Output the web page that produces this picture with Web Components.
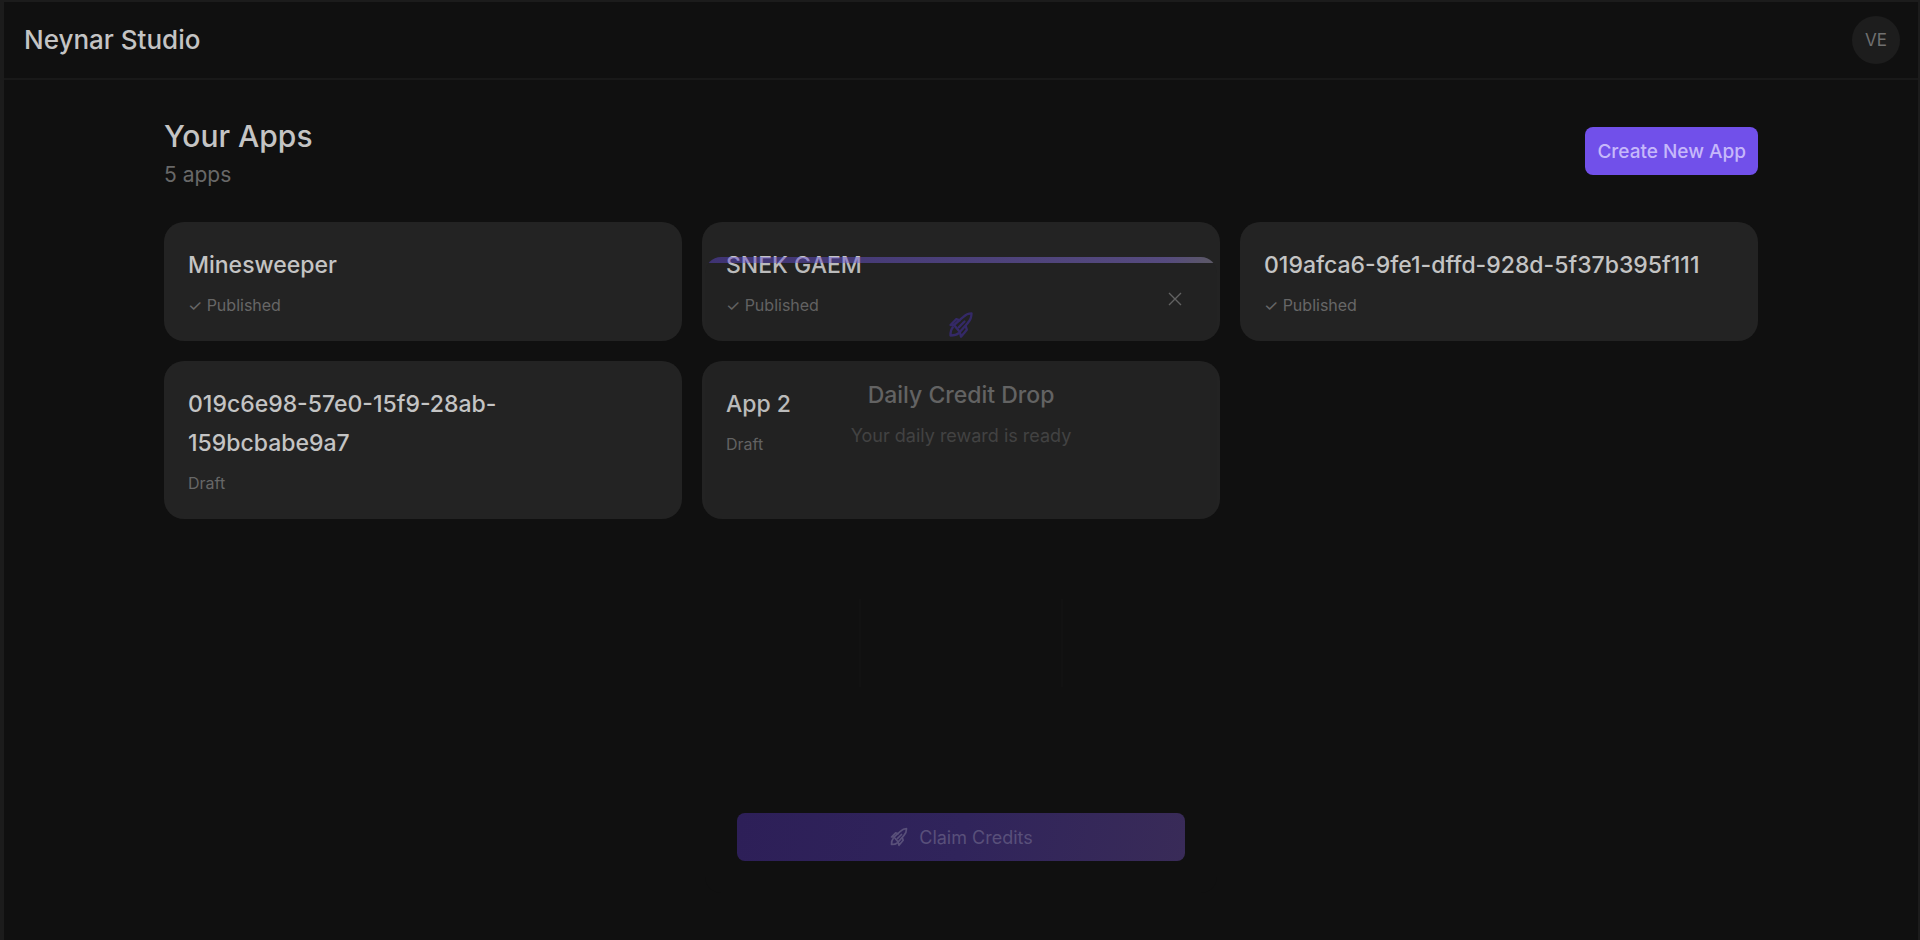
<!DOCTYPE html>
<html lang="en">
<head>
<meta charset="utf-8">
<meta name="viewport" content="width=device-width, initial-scale=1">
<title>Neynar Studio</title>
<style>
    html, body {
        margin: 0;
        min-height: 100%;
        background-color: #101010;
    }

    body {
        display: flex;
        min-height: 100vh;
        color: #c4c4c4;
        font-family: Inter, "Noto Sans", sans-serif;
    }
</style>
</head>
<body>
<studio-shell>
    <studio-header slot="header" initials="VE">Neynar Studio</studio-header>
    <apps-heading count="5 apps">Your Apps</apps-heading>
    <app-grid>
        <app-card status="✓ Published">Minesweeper</app-card>
        <app-card status="✓ Published">SNEK GAEM</app-card>
        <app-card status="✓ Published">019afca6-9fe1-dffd-928d-5f37b395f111</app-card>
        <app-card status="Draft">019c6e98-57e0-15f9-28ab-159bcbabe9a7</app-card>
        <app-card status="Draft">App 2</app-card>
    </app-grid>
    <credit-dialog slot="overlay">
        <span slot="title">Daily Credit Drop</span>
        <span slot="text">Your daily reward is ready</span>
        <span slot="action">Claim Credits</span>
    </credit-dialog>
</studio-shell>

<script>
class StudioShell extends HTMLElement {
    constructor() {
        super();
        this.shadowDOM = this.attachShadow({mode: "open"});
    }

    connectedCallback() {
        this.render();
    }

    render() {
        this.shadowDOM.innerHTML = `
        <style>
            :host {
                display: block;
                position: relative;
                flex: 1;
                box-sizing: border-box;
                border: 2px solid #1c1c1c;
                border-width: 2px 2px 0 4px;
            }

            main {
                padding: 32px 160px;
            }
        </style>
        <slot name="header"></slot>
        <main><slot></slot></main>
        <slot name="overlay"></slot>
        `;
    }
}

class StudioHeader extends HTMLElement {
    constructor() {
        super();
        this.shadowDOM = this.attachShadow({mode: "open"});
    }

    connectedCallback() {
        this.render();
    }

    render() {
        this.shadowDOM.innerHTML = `
        <style>
            :host {
                display: block;
            }

            header {
                display: flex;
                align-items: center;
                justify-content: space-between;
                height: 76px;
                padding: 0 18px 0 20px;
                border-bottom: 2px solid #191919;
            }

            .brand {
                font-size: 26px;
                font-weight: 500;
                line-height: 32px;
            }

            .avatar {
                width: 48px;
                height: 48px;
                padding: 0;
                border: 0;
                border-radius: 50%;
                color: #707070;
                background-color: #1d1d1d;
                font: inherit;
                font-size: 17px;
            }
        </style>
        <header>
            <span class="brand"><slot></slot></span>
            <button class="avatar" type="button">${this.getAttribute("initials")}</button>
        </header>
        `;
    }
}

class AppsHeading extends HTMLElement {
    constructor() {
        super();
        this.shadowDOM = this.attachShadow({mode: "open"});
    }

    connectedCallback() {
        this.render();
    }

    render() {
        this.shadowDOM.innerHTML = `
        <style>
            :host {
                display: flex;
                align-items: center;
                justify-content: space-between;
                margin-bottom: 32px;
            }

            h1 {
                margin: 0;
                font-size: 30px;
                font-weight: 500;
                line-height: 48px;
            }

            p {
                margin: 0;
                color: #686868;
                font-size: 21px;
                line-height: 30px;
            }

            button {
                height: 48px;
                padding: 0 12px;
                border: 0;
                border-radius: 8px;
                color: #c6b8fa;
                background-color: #7150ea;
                font: inherit;
                font-size: 19px;
                font-weight: 500;
            }
        </style>
        <div>
            <h1><slot></slot></h1>
            <p>${this.getAttribute("count")}</p>
        </div>
        <button type="button">Create New App</button>
        `;
    }
}

class AppGrid extends HTMLElement {
    constructor() {
        super();
        this.shadowDOM = this.attachShadow({mode: "open"});
    }

    connectedCallback() {
        this.render();
    }

    render() {
        this.shadowDOM.innerHTML = `
        <style>
            :host {
                display: grid;
                grid-template-columns: repeat(3, minmax(0, 1fr));
                gap: 20px;
            }
        </style>
        <slot></slot>
        `;
    }
}

class AppCard extends HTMLElement {
    constructor() {
        super();
        this.shadowDOM = this.attachShadow({mode: "open"});
    }

    connectedCallback() {
        this.render();
    }

    render() {
        this.shadowDOM.innerHTML = `
        <style>
            :host {
                display: block;
                padding: 24px;
                border-radius: 20px;
                background-color: #232323;
            }

            h2 {
                margin: 0 0 8px;
                font-size: 23px;
                font-weight: 500;
                line-height: 39px;
            }

            p {
                margin: 0;
                color: #676767;
                font-size: 16px;
                line-height: 24px;
            }
        </style>
        <h2><slot></slot></h2>
        <p>${this.getAttribute("status")}</p>
        `;
    }
}

class CreditDialog extends HTMLElement {
    constructor() {
        super();
        this.shadowDOM = this.attachShadow({mode: "open"});
    }

    connectedCallback() {
        this.render();
    }

    // rocket, shared by the badge and the claim button
    icon(size) {
        return `
        <svg width="${size}" height="${size}" viewBox="0 0 24 24" fill="none" stroke="currentColor"
             stroke-width="2" stroke-linecap="round" stroke-linejoin="round" aria-hidden="true">
            <path d="M5 14c-2 2-2 5-2 7 2 0 5 0 7-2"/>
            <path d="M6 12 14 5c2-2 5-3 7-3 0 3-1 6-3 8l-7 8z"/>
            <path d="m6 12-3 0 5-5 3 1M11 18l1 4 5-6-1-3M10 14l5-5"/>
        </svg>`;
    }

    render() {
        this.shadowDOM.innerHTML = `
        <style>
            :host {
                display: block;
                position: absolute;
                top: 255px;
                left: 50%;
                width: 512px;
                margin-left: -256px;
            }

            section {
                position: relative;
                overflow: hidden;
                border-radius: 16px;
                background-color: rgba(17, 17, 17, 0.05);
                text-align: center;
            }

            .bar {
                height: 6px;
                background: linear-gradient(90deg, rgba(98, 72, 214, 0.45), rgba(128, 108, 202, 0.55) 90%, rgba(150, 145, 165, 0.5));
            }

            .body {
                display: flex;
                flex-direction: column;
                align-items: center;
                padding: 48px 32px 32px;
            }

            .badge {
                display: flex;
                color: #342967;
            }

            h2 {
                margin: 38px 0 8px;
                color: #636363;
                font-size: 23px;
                font-weight: 500;
                line-height: 36px;
            }

            p {
                margin: 0;
                color: #424242;
                font-size: 18px;
                line-height: 30px;
            }

            .drop {
                width: 200px;
                height: 88px;
                margin: 148px 0 126px;
                border: 1px solid #121212;
                border-width: 0 2px;
            }

            .claim {
                display: flex;
                align-items: center;
                justify-content: center;
                gap: 10px;
                width: 100%;
                height: 48px;
                padding: 0;
                border: 0;
                border-radius: 8px;
                color: #59507a;
                background: linear-gradient(100deg, #2d1f58, #30245b 50%, #392b58);
                font: inherit;
                font-size: 18px;
            }

            .close {
                display: flex;
                position: absolute;
                top: 32px;
                right: 32px;
                padding: 2px;
                border: 0;
                color: #626262;
                background: none;
            }
        </style>
        <section role="dialog" aria-labelledby="title">
            <div class="bar"></div>
            <button class="close" type="button" aria-label="Close">
                <svg width="16" height="16" viewBox="0 0 16 16" stroke="currentColor" stroke-width="1.4">
                    <path d="M2 2l12 12M14 2L2 14"/>
                </svg>
            </button>
            <div class="body">
                <div class="badge">${this.icon(28)}</div>
                <h2 id="title"><slot name="title"></slot></h2>
                <p><slot name="text"></slot></p>
                <div class="drop"></div>
                <button class="claim" type="button">${this.icon(20)}<slot name="action"></slot></button>
            </div>
        </section>
        `;
    }
}

customElements.define("studio-shell", StudioShell);
customElements.define("studio-header", StudioHeader);
customElements.define("apps-heading", AppsHeading);
customElements.define("app-grid", AppGrid);
customElements.define("app-card", AppCard);
customElements.define("credit-dialog", CreditDialog);
</script>
</body>
</html>
